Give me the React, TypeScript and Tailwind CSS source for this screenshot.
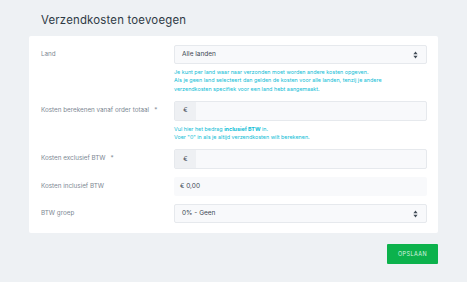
import React from "react";

const Caret = () => (
  <svg width="5" height="8" viewBox="0 0 5 8" className="shrink-0">
    <path d="M2.5 0.5 L4.6 3.2 H0.4 Z" fill="#3f4a55" />
    <path d="M2.5 7.5 L4.6 4.8 H0.4 Z" fill="#3f4a55" />
  </svg>
);

const Label = ({ children, req }: { children: React.ReactNode; req?: boolean }) => (
  <div className="w-[133px] shrink-0 text-[6.3px] text-[#7d8893] flex items-center h-[19px]">
    {children}
    {req && <span className="ml-[5px] text-[#7d8893]">*</span>}
  </div>
);

const Select = ({ value }: { value: string }) => (
  <div className="h-[19px] w-[253px] rounded-[2px] border border-[#e6e9ed] bg-[#f8f9fb] flex items-center justify-between pl-[7px] pr-[8px] text-[6.5px] text-[#3d4852]">
    <span>{value}</span>
    <Caret />
  </div>
);

const EuroInput = () => (
  <div className="h-[20px] w-[253px] rounded-[2px] border border-[#e6e9ed] bg-[#f8f9fb] flex items-stretch">
    <div className="w-[21px] bg-[#eef0f3] flex items-center justify-center text-[6.5px] text-[#3d4852]">€</div>
    <div className="flex-1" />
  </div>
);

const Help = ({ children }: { children: React.ReactNode }) => (
  <div className="text-[5.4px] leading-[8.3px] text-[#0fbdd6] mt-[4px]">{children}</div>
);

export default function App() {
  return (
    <div
      className="w-[467px] h-[282px] bg-[#eef1f4] overflow-hidden"
      style={{ fontFamily: "Inter, 'Noto Sans', sans-serif" }}
    >
      <div className="pl-[41px] pt-[12px] h-[36px] text-[11.4px] text-[#2e3a45] tracking-[0.2px]">
        Verzendkosten toevoegen
      </div>
      <div className="ml-[29px] w-[409px] bg-white rounded-[2px] pl-[12px] pr-[11px] pt-[9px] pb-[10px] flex flex-col">
        <div className="flex">
          <Label>Land</Label>
          <div className="flex flex-col">
            <Select value="Alle landen" />
            <Help>
              Je kunt per land waar naar verzonden moet worden andere kosten opgeven.
              <br />
              Als je geen land selecteert dan gelden de kosten voor alle landen, tenzij je andere
              <br />
              verzendkosten specifiek voor een land hebt aangemaakt.
            </Help>
          </div>
        </div>
        <div className="flex mt-[8px]">
          <div className="pt-[0.5px]">
            <Label req>Kosten berekenen vanaf order totaal</Label>
          </div>
          <div className="flex flex-col">
            <EuroInput />
            <Help>
              Vul hier het bedrag <b className="font-bold">inclusief BTW</b> in.
              <br />
              Voer "0" in als je altijd verzendkosten wilt berekenen.
            </Help>
          </div>
        </div>
        <div className="flex mt-[8px]">
          <Label req>Kosten exclusief BTW</Label>
          <EuroInput />
        </div>
        <div className="flex mt-[8px]">
          <Label>Kosten inclusief BTW</Label>
          <div className="h-[19px] w-[253px] rounded-[2px] bg-[#f8f9fb] flex items-center pl-[6px] text-[6.5px] text-[#3d4852]">
            € 0,00
          </div>
        </div>
        <div className="flex mt-[8px]">
          <Label>BTW groep</Label>
          <Select value="0% - Geen" />
        </div>
      </div>
      <div className="flex justify-end pr-[29px] mt-[11px]">
        <div className="w-[51px] h-[20px] bg-[#0cb24c] rounded-[1px] flex items-center justify-center text-[5.5px] text-[#d8f5e2] tracking-[0.4px]">
          OPSLAAN
        </div>
      </div>
    </div>
  );
}
